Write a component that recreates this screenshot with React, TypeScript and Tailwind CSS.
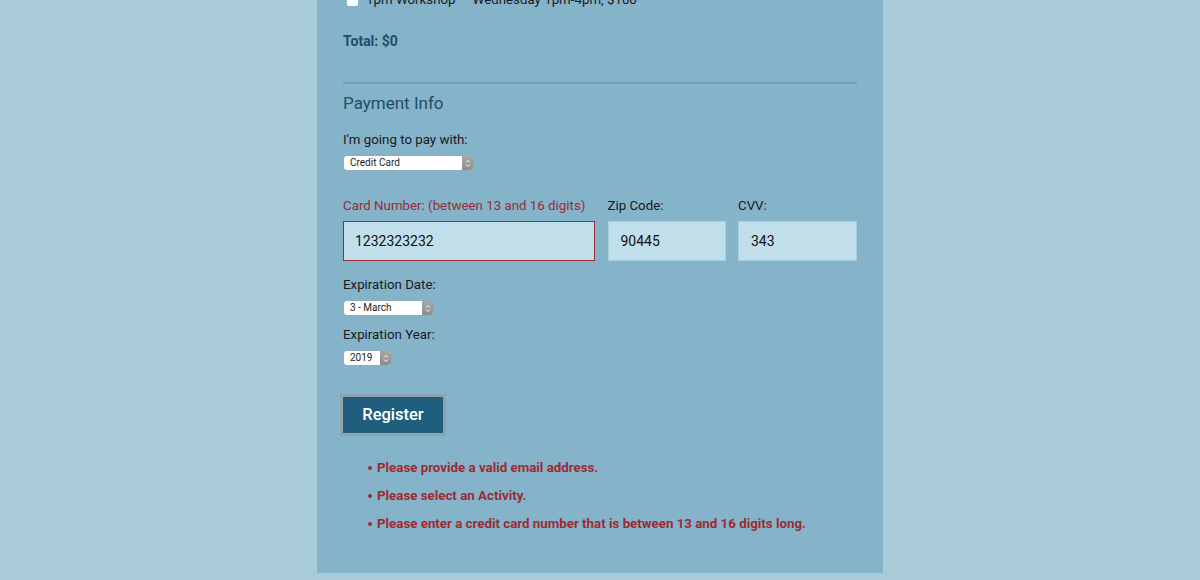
const SelectBox = ({ value, width }: { value: string; width: string }) => (
  <div
    className={`ml-[1px] flex h-[14px] ${width} items-stretch overflow-hidden rounded-[3px] bg-white shadow-[0_0_0_0.5px_#9aa6ad]`}
  >
    <span className="flex-1 pl-[6px] text-[10px] leading-[14px] text-[#222]">{value}</span>
    <span className="flex w-[11px] items-center justify-center bg-gradient-to-b from-[#a7a7a7] to-[#8d8d8d]">
      <svg width="6" height="9" viewBox="0 0 6 9" fill="none" stroke="white" strokeWidth="1">
        <path d="M1 3.5 L3 1.5 L5 3.5" />
        <path d="M1 5.5 L3 7.5 L5 5.5" />
      </svg>
    </span>
  </div>
);

const errors = [
  'Please provide a valid email address.',
  'Please select an Activity.',
  'Please enter a credit card number that is between 13 and 16 digits long.',
];

export default function App() {
  return (
    <div className="h-[580px] w-full overflow-hidden bg-[#a9cad7] font-['Roboto',sans-serif]">
      <div className="mx-auto flex h-[573px] w-[566px] flex-col bg-[#84b3ca] px-[26px]">
        <div className="-mt-[10px] flex h-[20px] items-center gap-[8px] pl-[4px] text-[13.3px] text-[#1a1a1a]">
          <span className="h-[11px] w-[11px] rounded-[2px] bg-white" />
          <span>1pm Workshop — Wednesday 1pm-4pm, $100</span>
        </div>

        <p className="mt-[22px] text-[14px] font-bold leading-[18px] text-[#1e4e69]">Total: $0</p>

        <hr className="mt-[32px] border-t-2 border-[#6aa0ba]" />

        <h2 className="mt-[8px] text-[17px] leading-[22px] text-[#1e4e69]">Payment Info</h2>

        <p className="mt-[17px] text-[13.3px] leading-[18px] text-[#1a1a1a]">I'm going to pay with:</p>
        <div className="mt-[7px]">
          <SelectBox value="Credit Card" width="w-[129px]" />
        </div>

        <div className="mt-[27px] grid grid-cols-[252px_118px_119px] gap-x-[12.5px]">
          <label className="whitespace-nowrap text-[13.3px] leading-[18px] text-[#9c2b32]">
            Card Number: (between 13 and 16 digits)
          </label>
          <label className="text-[13.3px] leading-[18px] text-[#1a1a1a]">Zip Code:</label>
          <label className="text-[13.3px] leading-[18px] text-[#1a1a1a]">CVV:</label>
          <div className="mt-[6px] flex h-[40px] items-center border-[1.5px] border-[#9c2b32] bg-[#c1dfea] pl-[11px] text-[14px] text-[#111]">
            1232323232
          </div>
          <div className="mt-[6px] flex h-[40px] items-center border border-[#a9d0de] bg-[#c1dfea] pl-[12px] text-[14px] text-[#111]">
            90445
          </div>
          <div className="mt-[6px] flex h-[40px] items-center border border-[#a9d0de] bg-[#c1dfea] pl-[12px] text-[14px] text-[#111]">
            343
          </div>
        </div>

        <p className="mt-[15px] text-[13.3px] leading-[18px] text-[#1a1a1a]">Expiration Date:</p>
        <div className="mt-[7px]">
          <SelectBox value="3 - March" width="w-[89px]" />
        </div>
        <p className="mt-[11px] text-[13.3px] leading-[18px] text-[#1a1a1a]">Expiration Year:</p>
        <div className="mt-[7px]">
          <SelectBox value="2019" width="w-[47px]" />
        </div>

        <button
          type="button"
          className="-ml-[3px] mt-[29px] h-[42px] w-[106px] self-start border-[3px] border-[#8fa3ae] bg-[#1f5f7d] text-[16.5px] font-medium text-white"
        >
          Register
        </button>

        <ul className="mt-[18px] pl-[25px]">
          {errors.map(e => (
            <li key={e} className="flex h-[28px] items-center gap-[5px] text-[13.3px] font-bold text-[#9c2b32]">
              <span className="h-[4px] w-[4px] rounded-full bg-[#9c2b32]" />
              {e}
            </li>
          ))}
        </ul>
      </div>
    </div>
  );
}
